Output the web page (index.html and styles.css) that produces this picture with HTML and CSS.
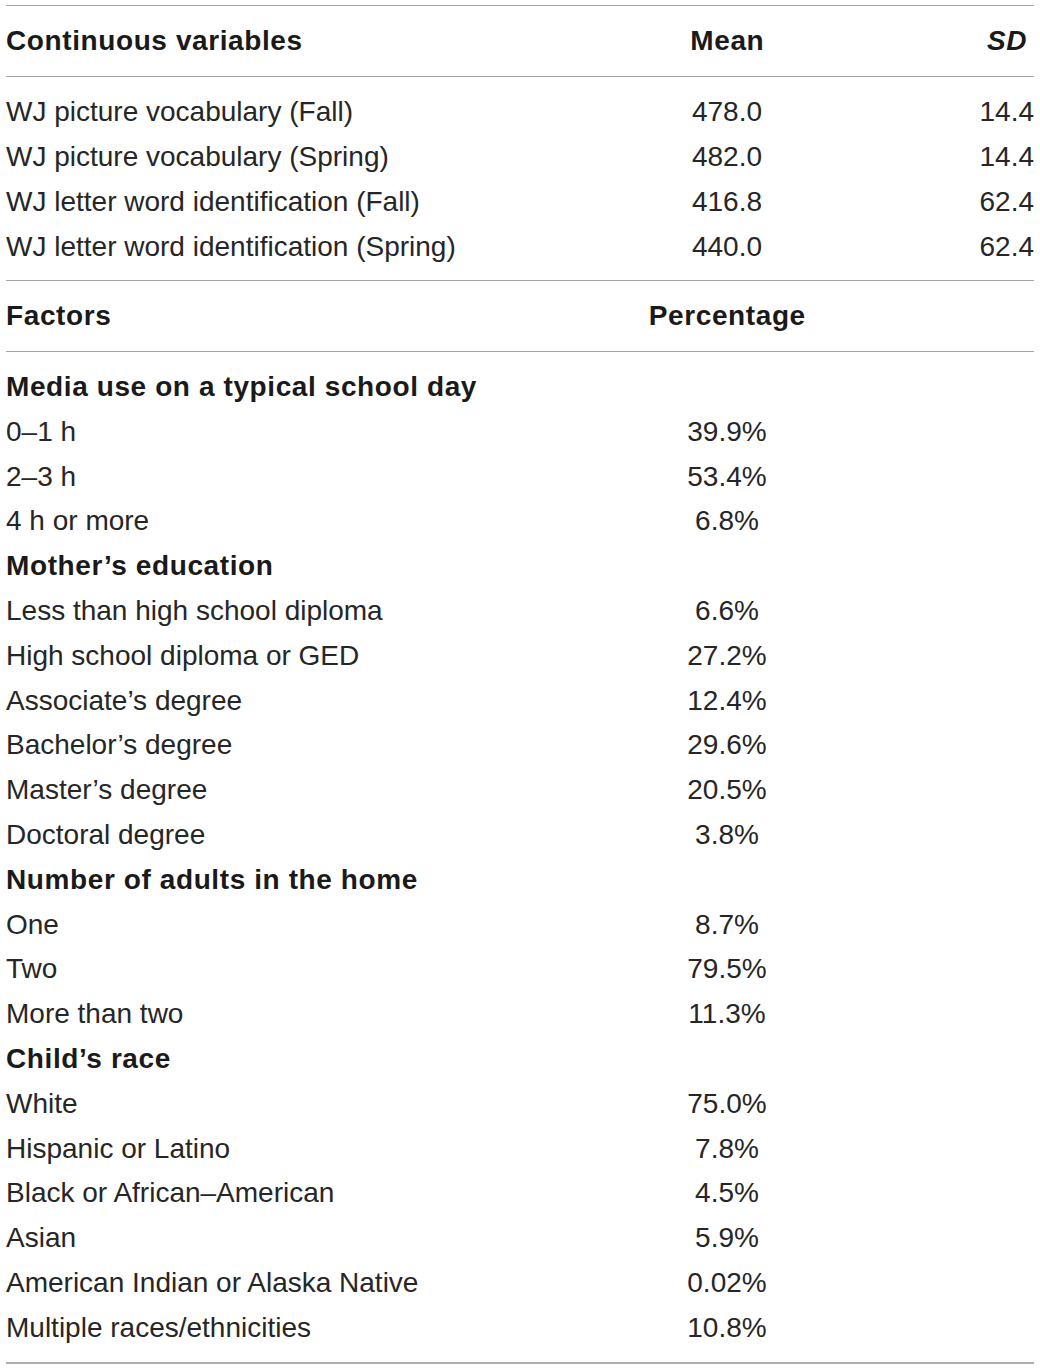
FILE: index.html
```html
<!DOCTYPE html>
<html lang="en">
<head>
<meta charset="utf-8">
<title>Descriptive statistics</title>
<link rel="stylesheet" href="styles.css">
</head>
<body>
<div class="table">
  <div class="head row first">
    <div class="c1">Continuous variables</div>
    <div class="c2">Mean</div>
    <div class="c3 sd">SD</div>
  </div>
  <div class="body cont">
    <div class="row"><div class="c1">WJ picture vocabulary (Fall)</div><div class="c2">478.0</div><div class="c3">14.4</div></div>
    <div class="row"><div class="c1">WJ picture vocabulary (Spring)</div><div class="c2">482.0</div><div class="c3">14.4</div></div>
    <div class="row"><div class="c1">WJ letter word identification (Fall)</div><div class="c2">416.8</div><div class="c3">62.4</div></div>
    <div class="row"><div class="c1">WJ letter word identification (Spring)</div><div class="c2">440.0</div><div class="c3">62.4</div></div>
  </div>
  <div class="head row">
    <div class="c1">Factors</div>
    <div class="c2">Percentage</div>
    <div class="c3"></div>
  </div>
  <div class="body factors">
    <div class="row group"><div class="c1">Media use on a typical school day</div></div>
    <div class="row"><div class="c1">0–1 h</div><div class="c2">39.9%</div><div class="c3"></div></div>
    <div class="row"><div class="c1">2–3 h</div><div class="c2">53.4%</div><div class="c3"></div></div>
    <div class="row"><div class="c1">4 h or more</div><div class="c2">6.8%</div><div class="c3"></div></div>
    <div class="row group"><div class="c1">Mother’s education</div></div>
    <div class="row"><div class="c1">Less than high school diploma</div><div class="c2">6.6%</div><div class="c3"></div></div>
    <div class="row"><div class="c1">High school diploma or GED</div><div class="c2">27.2%</div><div class="c3"></div></div>
    <div class="row"><div class="c1">Associate’s degree</div><div class="c2">12.4%</div><div class="c3"></div></div>
    <div class="row"><div class="c1">Bachelor’s degree</div><div class="c2">29.6%</div><div class="c3"></div></div>
    <div class="row"><div class="c1">Master’s degree</div><div class="c2">20.5%</div><div class="c3"></div></div>
    <div class="row"><div class="c1">Doctoral degree</div><div class="c2">3.8%</div><div class="c3"></div></div>
    <div class="row group"><div class="c1">Number of adults in the home</div></div>
    <div class="row"><div class="c1">One</div><div class="c2">8.7%</div><div class="c3"></div></div>
    <div class="row"><div class="c1">Two</div><div class="c2">79.5%</div><div class="c3"></div></div>
    <div class="row"><div class="c1">More than two</div><div class="c2">11.3%</div><div class="c3"></div></div>
    <div class="row group"><div class="c1">Child’s race</div></div>
    <div class="row"><div class="c1">White</div><div class="c2">75.0%</div><div class="c3"></div></div>
    <div class="row"><div class="c1">Hispanic or Latino</div><div class="c2">7.8%</div><div class="c3"></div></div>
    <div class="row"><div class="c1">Black or African–American</div><div class="c2">4.5%</div><div class="c3"></div></div>
    <div class="row"><div class="c1">Asian</div><div class="c2">5.9%</div><div class="c3"></div></div>
    <div class="row"><div class="c1">American Indian or Alaska Native</div><div class="c2">0.02%</div><div class="c3"></div></div>
    <div class="row"><div class="c1">Multiple races/ethnicities</div><div class="c2">10.8%</div><div class="c3"></div></div>
  </div>
</div>
</body>
</html>
```

FILE: styles.css
```css
html, body {
  margin: 0;
  padding: 0;
  background: #ffffff;
}

body {
  font-family: "Liberation Sans", Arial, Helvetica, sans-serif;
  color: #262626;
  font-size: 28px;
}

.table {
  margin: 5px 0 0 6px;
  width: 1028px;
  border-bottom: 2px solid #adadad;
}

.row {
  display: grid;
  grid-template-columns: 642px 158px 228px;
  align-items: center;
  white-space: nowrap;
}

.c2 {
  text-align: center;
}

.c3 {
  text-align: right;
}

.head {
  height: 70px;
  border-top: 1px solid #a6a6a6;
  border-bottom: 1px solid #a6a6a6;
  font-weight: 700;
  letter-spacing: 0.6px;
  color: #1a1a1a;
}

.head .c2 {
  margin-right: -0.6px;
}

.head .sd {
  font-style: italic;
  padding-right: 7px;
}

.head + .body + .head {
  border-top: none;
}

.body.cont {
  padding: 12px 0 11px;
  border-bottom: 1px solid #a6a6a6;
}

.body.cont .row {
  height: 45px;
}

.body.factors {
  padding: 12.6px 0 11.8px;
}

.body.factors .row {
  height: 44.8px;
}

.group {
  font-weight: 700;
  letter-spacing: 0.6px;
  color: #1a1a1a;
}
```
